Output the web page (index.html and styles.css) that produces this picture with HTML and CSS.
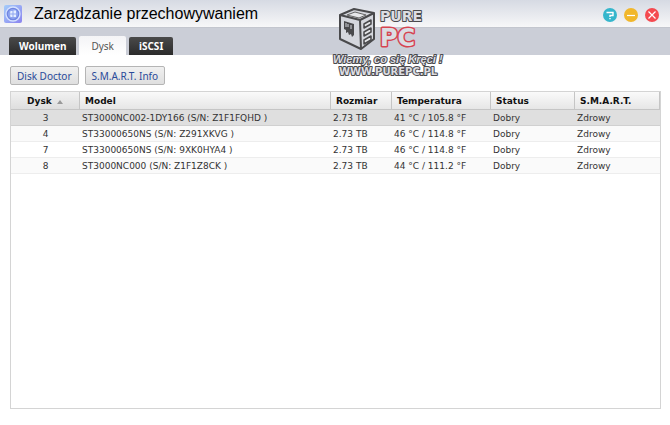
FILE: index.html
```html
<!DOCTYPE html>
<html lang="pl">
<head>
  <meta charset="UTF-8">
  <meta name="viewport" content="width=device-width, initial-scale=1">
  <title>Zarządzanie przechowywaniem</title>
  <link rel="stylesheet" href="styles.css">
</head>
<body>
  <header class="titlebar">
    <svg class="app-icon" viewBox="0 0 18 18" aria-hidden="true">
      <defs>
        <linearGradient id="appBg" x1="0" y1="0" x2="1" y2="1">
          <stop offset="0" stop-color="#a4cdfa"/>
          <stop offset="1" stop-color="#8b83ef"/>
        </linearGradient>
      </defs>
      <rect width="18" height="18" rx="2" fill="url(#appBg)"/>
      <circle cx="9" cy="9" r="7" fill="#7186e2" stroke="#d5e2ff" stroke-width="1.3"/>
      <circle cx="9" cy="9" r="5" fill="#8fa6f0"/>
      <path d="M6.500 6h2v2.500h-2.500zM9.500 5.500H12v3H9.500zM6 9.500h2.500V12H6.500zM9.500 9.500H12V12H9.500z" fill="#e6efff"/>
    </svg>
    <h1>Zarządzanie przechowywaniem</h1>
    <div class="window-buttons">
      <button type="button" class="help" aria-label="Pomoc">
        <svg viewBox="0 0 14 14"><path d="M3.500 4.500h6.500v3H7v1.500M7 10v1.300" fill="none" stroke="#fff" stroke-width="1.400"/></svg>
      </button>
      <button type="button" class="minimize" aria-label="Minimalizuj">
        <svg viewBox="0 0 14 14"><path d="M3 7.500h8" stroke="#fff" stroke-width="1.200"/></svg>
      </button>
      <button type="button" class="close" aria-label="Zamknij">
        <svg viewBox="0 0 14 14"><path d="M3.500 3.500l7 7M10.500 3.500l-7 7" stroke="#fff" stroke-width="1.200"/></svg>
      </button>
    </div>
  </header>

  <nav class="tabs">
    <button type="button">Wolumen</button>
    <button type="button" class="active">Dysk</button>
    <button type="button">iSCSI</button>
  </nav>

  <main>
    <div class="toolbar">
      <button type="button">Disk Doctor</button>
      <button type="button">S.M.A.R.T. Info</button>
    </div>

    <div class="grid">
      <table>
        <colgroup>
          <col class="col-disk">
          <col>
          <col class="col-size">
          <col class="col-temp">
          <col class="col-status">
          <col class="col-smart">
        </colgroup>
        <thead>
          <tr>
            <th class="sorted">Dysk <svg class="sort" viewBox="0 0 6 4" aria-hidden="true"><path d="M3 0l3 4H0z" fill="#999"/></svg></th>
            <th>Model</th>
            <th>Rozmiar</th>
            <th>Temperatura</th>
            <th>Status</th>
            <th>S.M.A.R.T.</th>
          </tr>
        </thead>
        <tbody>
          <tr class="selected">
            <td>3</td>
            <td>ST3000NC002-1DY166 (S/N: Z1F1FQHD )</td>
            <td>2.73 TB</td>
            <td>41 °C / 105.8 °F</td>
            <td>Dobry</td>
            <td>Zdrowy</td>
          </tr>
          <tr>
            <td>4</td>
            <td>ST33000650NS (S/N: Z291XKVG )</td>
            <td>2.73 TB</td>
            <td>46 °C / 114.8 °F</td>
            <td>Dobry</td>
            <td>Zdrowy</td>
          </tr>
          <tr>
            <td>7</td>
            <td>ST33000650NS (S/N: 9XK0HYA4 )</td>
            <td>2.73 TB</td>
            <td>46 °C / 114.8 °F</td>
            <td>Dobry</td>
            <td>Zdrowy</td>
          </tr>
          <tr>
            <td>8</td>
            <td>ST3000NC000 (S/N: Z1F1Z8CK )</td>
            <td>2.73 TB</td>
            <td>44 °C / 111.2 °F</td>
            <td>Dobry</td>
            <td>Zdrowy</td>
          </tr>
        </tbody>
      </table>
    </div>
  </main>

  <!-- watermark -->
  <svg class="watermark" viewBox="0 0 120 74" role="img" aria-label="PurePC">
    <g stroke-linejoin="round">
      <path d="M10 9L24 3l20 4v26L31 43 10 33z" fill="#d5d7dd" stroke="#4a4a4c" stroke-width="2"/>
      <path d="M10 9l20 5 14-7M30 14l1 29" fill="none" stroke="#4a4a4c" stroke-width="2"/>
      <path d="M17 9l8-3 11 3-7 3z" fill="#e6e7ea" stroke="#666"/>
      <path d="M14 15v8l2 1v3l2-1 1 3 2-1 1 3 2-2v-11z" fill="#4a4a4c"/>
      <path d="M16 17v4M18 18v3M21 19v4" stroke="#d5d7dd"/>
      <path d="M34 18l7-4v4l-7 4zM34 26l7-4v4l-7 4zM34 34l7-4v4l-7 4z" fill="#e6e7ea" stroke="#4a4a4c" stroke-width="1.500"/>
    </g>
    <text class="wm-pure" x="50" y="15">PURE</text>
    <text class="wm-pc" x="50" y="40">PC</text>
    <text class="wm-motto" x="3" y="57">Wiemy, co się Kręci !</text>
    <text class="wm-url" x="9" y="69">WWW.PUREPC.PL</text>
  </svg>
</body>
</html>
```
FILE: styles.css
```css
* {
  box-sizing: border-box;
}
body {
  display: flex;
  flex-direction: column;
  min-height: 100vh;
  margin: 0;
  background: #fff;
  font-family: "DejaVu Sans", Verdana, sans-serif;
  font-size: 9px;
  color: #333;
}
button {
  font-family: "Noto Sans", Tahoma, sans-serif;
  font-size: 10px;
  line-height: 16px;
  white-space: nowrap;
  cursor: pointer;
}

.titlebar {
  display: flex;
  align-items: center;
  height: 27px;
  padding: 0 11px 0 4px;
  background: linear-gradient(#d6dae3, #f7f7f8);
}
.app-icon {
  width: 18px;
  height: 18px;
}
.titlebar h1 {
  flex: 1;
  margin: 0 0 0 12px;
  font-family: "Liberation Sans", Arial, sans-serif;
  font-size: 16px;
  font-weight: normal;
  line-height: 24px;
  color: #000;
}
.window-buttons {
  display: flex;
  gap: 7px;
  padding-top: 3px;
}
.window-buttons button {
  width: 14px;
  height: 14px;
  padding: 0;
  border: none;
  border-radius: 50%;
}
.window-buttons svg {
  display: block;
}
.window-buttons .help {
  background: #35b6cc;
}
.window-buttons .minimize {
  background: #f1b72b;
}
.window-buttons .close {
  background: #f44a50;
}

.tabs {
  display: flex;
  align-items: flex-end;
  gap: 3px;
  height: 28px;
  padding-left: 9px;
  background: #cbced7;
  border-top: 1px solid #c3c6ce;
}
.tabs button {
  height: 18px;
  padding: 0 10px;
  border: none;
  border-radius: 2px 2px 0 0;
  background: linear-gradient(#4a4a4a, #2b2b2b);
  font-weight: bold;
  color: #fff;
}
.tabs .active {
  height: 19px;
  padding: 0 12px;
  background: linear-gradient(#f4f4f6, #fff);
  font-weight: normal;
  color: #555;
}

main {
  display: flex;
  flex: 1;
  flex-direction: column;
  padding: 11px 9px 16px 10px;
}
.toolbar {
  display: flex;
  gap: 6px;
  margin-bottom: 6px;
}
.toolbar button {
  height: 19px;
  padding: 0 6px;
  border: 1px solid #b5b5b5;
  border-radius: 2px;
  background: linear-gradient(#f0f0f0, #dfdfdf);
  color: #2a4a9a;
}

.grid {
  flex: 1;
  border: 1px solid #d4d4d4;
}
.grid table {
  width: 100%;
  table-layout: fixed;
  border-collapse: separate;
  border-spacing: 0;
}
.col-disk {
  width: 69px;
}
.col-size {
  width: 61px;
}
.col-temp {
  width: 99px;
}
.col-status {
  width: 84px;
}
.col-smart {
  width: 85px;
}
.grid th {
  height: 18px;
  padding: 0 5px;
  border-right: 1px solid #c5c5c5;
  border-bottom: 1px solid #c5c5c5;
  background: linear-gradient(#fafafa, #e6e6e6);
  text-align: left;
  color: #111;
}
.grid th:first-child,
.grid td:first-child {
  text-align: center;
}
.grid .sorted {
  background: linear-gradient(#f1f1f1, #dedede);
}
.sort {
  width: 6px;
  height: 4px;
  margin-left: 2px;
}
.grid td {
  height: 16px;
  padding: 0 2px;
  border-bottom: 1px solid #ededed;
  white-space: nowrap;
}
.grid tr:nth-child(even) td {
  background: #fafafa;
}
.grid .selected td {
  border-bottom-color: #d0d0d0;
  background: #dfdfdf;
}

.watermark {
  position: absolute;
  top: 6px;
  left: 330px;
  width: 120px;
  height: 74px;
  pointer-events: none;
}
.watermark text {
  paint-order: stroke;
  stroke: #4a4a4c;
  stroke-width: 2px;
  stroke-linejoin: round;
  fill: #dcdde2;
}
.watermark .wm-pure {
  font: bold 14px "DejaVu Sans", sans-serif;
}
.watermark .wm-pc {
  font: bold 24px "DejaVu Sans", sans-serif;
  stroke: #d64550;
  stroke-width: 3px;
}
.watermark .wm-motto {
  font: italic bold 11px "Liberation Sans", sans-serif;
}
.watermark .wm-url {
  font: bold 10px "DejaVu Sans", sans-serif;
}
```
